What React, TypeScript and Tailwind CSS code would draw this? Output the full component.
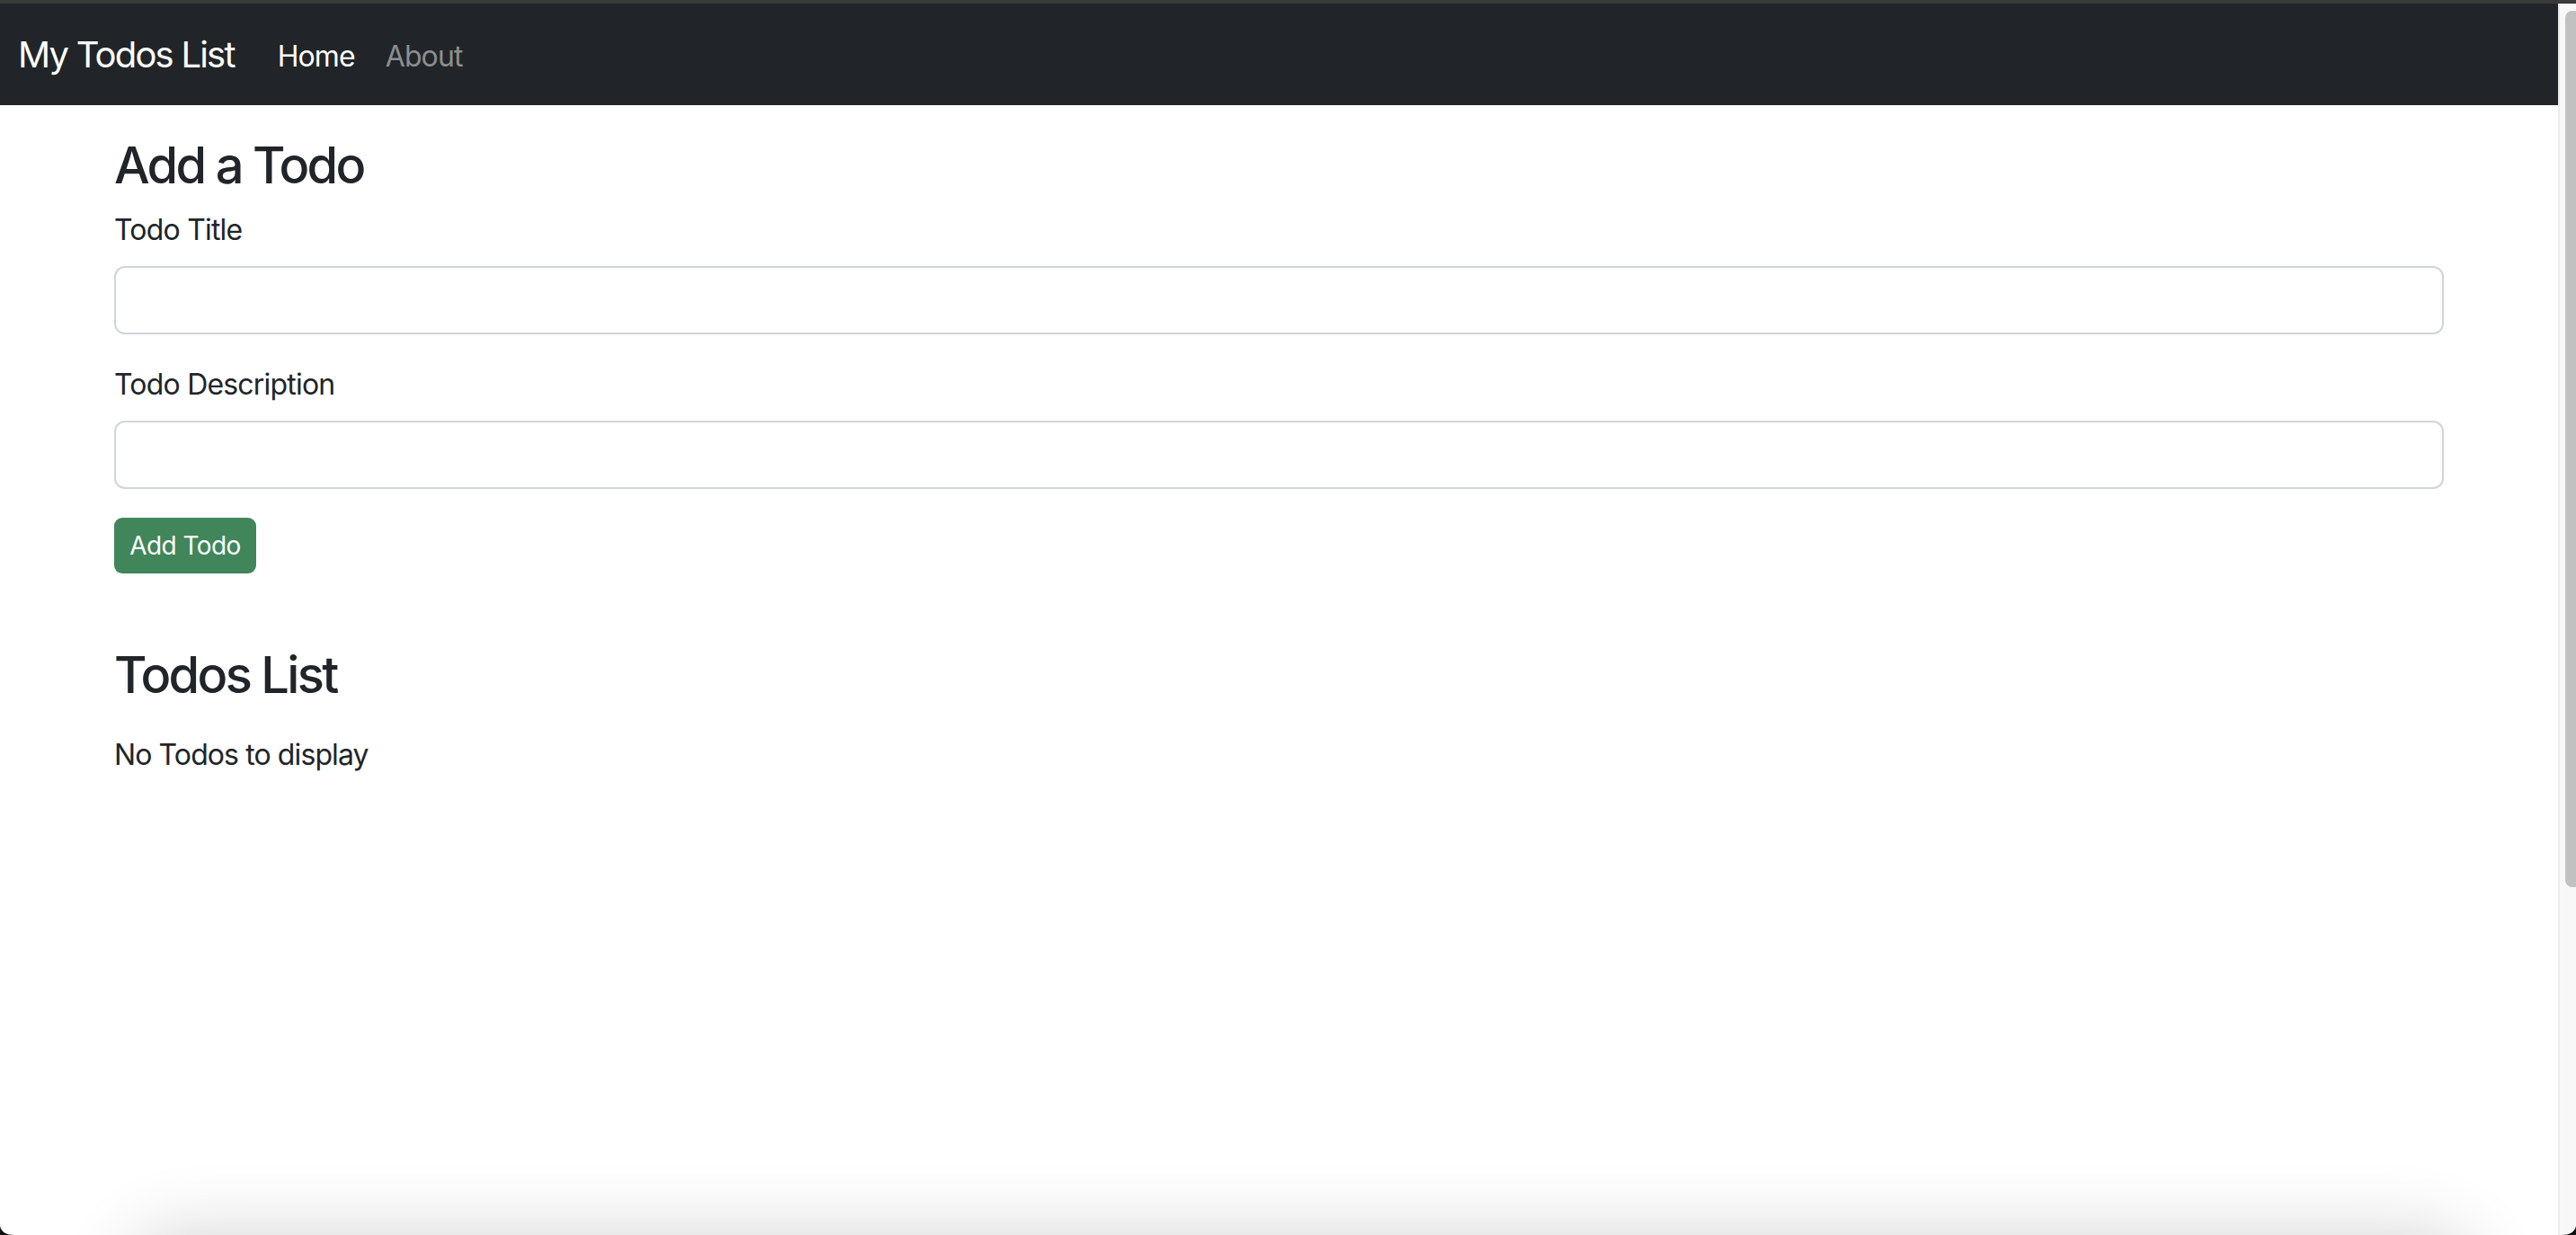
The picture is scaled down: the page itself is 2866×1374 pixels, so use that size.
const NAV_LINKS = [
  { label: "Home", active: true },
  { label: "About", active: false },
];

function Field({ label, id }: { label: string; id: string }) {
  return (
    <div className="mb-[32px]">
      <label htmlFor={id} className="block text-[32px] leading-[48px] tracking-[-0.8px] mb-[16px] text-[#212529]">
        {label}
      </label>
      <input
        id={id}
        type="text"
        className="block w-full h-[76px] rounded-[12px] border-2 border-[#d0d5da] bg-white px-[24px] text-[32px] outline-none"
      />
    </div>
  );
}

export default function App() {
  return (
    <div
      className="relative h-[1374px] w-full overflow-hidden bg-white flex flex-col"
      style={{ fontFamily: "Inter, 'Noto Sans', sans-serif" }}
    >
      <div className="h-[4px] w-full bg-[#3a3a3b] shrink-0" />
      <div className="flex flex-1 min-h-0">
        <div className="flex-1 min-w-0">
          {/* Navbar */}
          <nav className="h-[113px] bg-[#212529] flex items-center pl-[20px]">
            <span className="text-[40px] leading-[60px] text-white mr-[31px] tracking-[-1.8px]">My Todos List</span>
            <ul className="flex items-center mt-[4px]">
              {NAV_LINKS.map((item) => (
                <li key={item.label}>
                  <a
                    href="#"
                    className={`block px-[17px] text-[32px] leading-[48px] tracking-[-0.9px] ${item.active ? "text-white" : "text-[#8c8e91]"}`}
                  >
                    {item.label}
                  </a>
                </li>
              ))}
            </ul>
          </nav>

          {/* Content */}
          <div className="mx-auto w-[2640px] px-[24px] pt-[34px]">
            <h3 className="text-[56px] leading-[67px] font-medium text-[#212529] tracking-[-2.7px]">Add a Todo</h3>
            <form className="mt-[14px]" onSubmit={(e) => e.preventDefault()}>
              <Field label="Todo Title" id="title" />
              <Field label="Todo Description" id="desc" />
              <button
                type="submit"
                className="h-[62px] w-[158px] rounded-[9px] bg-[#40865a] text-white text-[28px] leading-[42px] tracking-[-0.6px] flex items-center justify-center"
              >
                Add Todo
              </button>
            </form>

            <h3 className="mt-[80px] text-[56px] leading-[67px] font-medium text-[#212529] tracking-[-2.7px]">Todos List</h3>
            <p className="mt-[31px] text-[32px] leading-[48px] tracking-[-0.9px] text-[#212529]">No Todos to display</p>
          </div>
        </div>

        {/* Scrollbar */}
        <div className="w-[20px] shrink-0 bg-[#f8f8f8] border-l-2 border-[#ebebeb] pl-[6px] pt-[8px]">
          <div className="h-[975px] w-full bg-[#c1c1c1] rounded-l-[8px] rounded-r-none" />
        </div>
      </div>

      {/* window shadow at bottom */}
      <div className="absolute left-[170px] right-[140px] top-[1400px] h-[60px] rounded-[40px] shadow-[0_0_80px_30px_rgba(0,0,0,0.16)]" />
      <svg className="absolute left-0 bottom-0" width="16" height="10" viewBox="0 0 16 10" aria-hidden>
        <path d="M0 0 Q2 10 16 10 L0 10 Z" fill="#111" />
      </svg>
      <svg className="absolute right-0 bottom-0" width="16" height="10" viewBox="0 0 16 10" aria-hidden>
        <path d="M16 0 Q14 10 0 10 L16 10 Z" fill="#111" />
      </svg>
    </div>
  );
}
